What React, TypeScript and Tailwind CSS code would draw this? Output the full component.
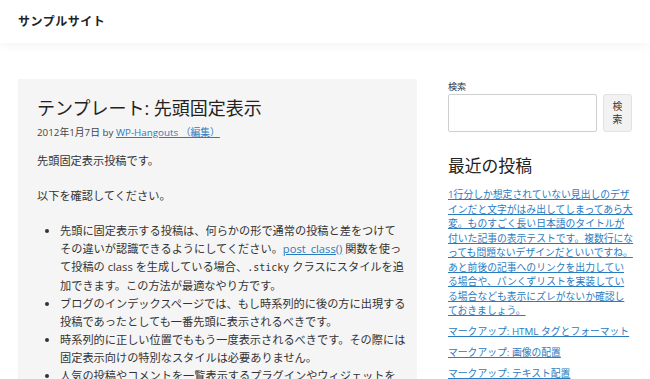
const FONT = { fontFamily: '"Open Sans", "Noto Sans CJK JP", sans-serif' };

const RECENT = [
  {
    lines: [
      '1行分しか想定されていない見出しのデザ',
      'インだと文字がはみ出してしまってあら大',
      '変。ものすごく長い日本語のタイトルが',
      '付いた記事の表示テストです。複数行にな',
      'っても問題ないデザインだといいですね。',
      'あと前後の記事へのリンクを出力してい',
      'る場合や、パンくずリストを実装してい',
      'る場合なども表示にズレがないか確認し',
      'ておきましょう。',
    ],
  },
  { lines: ['マークアップ: HTML タグとフォーマット'] },
  { lines: ['マークアップ: 画像の配置'] },
  { lines: ['マークアップ: テキスト配置'] },
];

function Lines({ lines }: { lines: string[] }) {
  return (
    <>
      {lines.map((l, i) => (
        <span key={i}>
          {l}
          {i < lines.length - 1 && <br />}
        </span>
      ))}
    </>
  );
}

export default function App() {
  return (
    <div className="min-h-screen bg-white text-[#333]" style={FONT}>
      {/* Header */}
      <header className="h-[43px] bg-white flex items-center px-[18px] shadow-[0_2px_10px_rgba(0,0,0,0.05)] relative">
        <span className="text-[12px] font-bold text-[#222] tracking-[0.5px]">サンプルサイト</span>
      </header>

      <div className="flex gap-[31px] px-[18px] pt-[36px]">
        {/* Main */}
        <main className="w-[399px] shrink-0 bg-[#f5f5f5] px-[19px] pt-[17px] pb-10">
          <h1 className="text-[18px] leading-[25px] text-[#222] font-normal">
            テンプレート: 先頭固定表示
          </h1>
          <p className="mt-[4px] mb-[11px] text-[9.8px] leading-[15.7px] text-[#444]">
            2012年1月7日 by{' '}
            <a href="#" className="text-[#2b7bbf] underline">
              WP-Hangouts （編集）
            </a>
          </p>
          <div className="text-[11.2px] leading-[18px] text-[#333]">
            <p className="mb-[17px]">先頭固定表示投稿です。</p>
            <p className="mb-[17px]">以下を確認してください。</p>
            <ul className="list-disc pl-[23px] whitespace-nowrap">
              <li>
                先頭に固定表示する投稿は、何らかの形で通常の投稿と差をつけて
                <br />
                その違いが認識できるようにしてください。
                <a href="#" className="text-[#2b7bbf] underline">
                  post_class()
                </a>{' '}
                関数を使っ
                <br />
                て投稿の class を生成している場合、
                <code className="font-['DejaVu_Sans_Mono',monospace] text-[10px]">.sticky</code>{' '}
                クラスにスタイルを追
                <br />
                加できます。この方法が最適なやり方です。
              </li>
              <li>
                ブログのインデックスページでは、もし時系列的に後の方に出現する
                <br />
                投稿であったとしても一番先頭に表示されるべきです。
              </li>
              <li>
                時系列的に正しい位置でももう一度表示されるべきです。その際には
                <br />
                固定表示向けの特別なスタイルは必要ありません。
              </li>
              <li>人気の投稿やコメントを一覧表示するプラグインやウィジェットを</li>
            </ul>
          </div>
        </main>

        {/* Sidebar */}
        <aside className="flex-1 min-w-0">
          <label className="block text-[9.1px] leading-[13px] text-[#333] pt-[1px]">検索</label>
          <div className="flex gap-[6px] mt-[1px]">
            <input
              type="text"
              className="h-[38px] w-[149px] border border-[#cfcfcf] rounded-[2px] bg-white"
            />
            <button className="h-[38px] w-[29px] bg-[#f2f2f2] border border-[#e2e2e2] rounded-[3px] text-[9.8px] leading-[13px] text-[#333] flex flex-col items-center justify-center">
              <span>検</span>
              <span>索</span>
            </button>
          </div>

          <h2 className="mt-[23px] text-[16.8px] leading-[22px] text-[#222] font-normal">最近の投稿</h2>
          <ul className="mt-[11px] flex flex-col gap-[6.5px] text-[9.8px] leading-[14.5px] whitespace-nowrap">
            {RECENT.map((r, i) => (
              <li key={i}>
                <a href="#" className="text-[#2b7bbf] underline">
                  <Lines lines={r.lines} />
                </a>
              </li>
            ))}
          </ul>
        </aside>
      </div>
    </div>
  );
}
